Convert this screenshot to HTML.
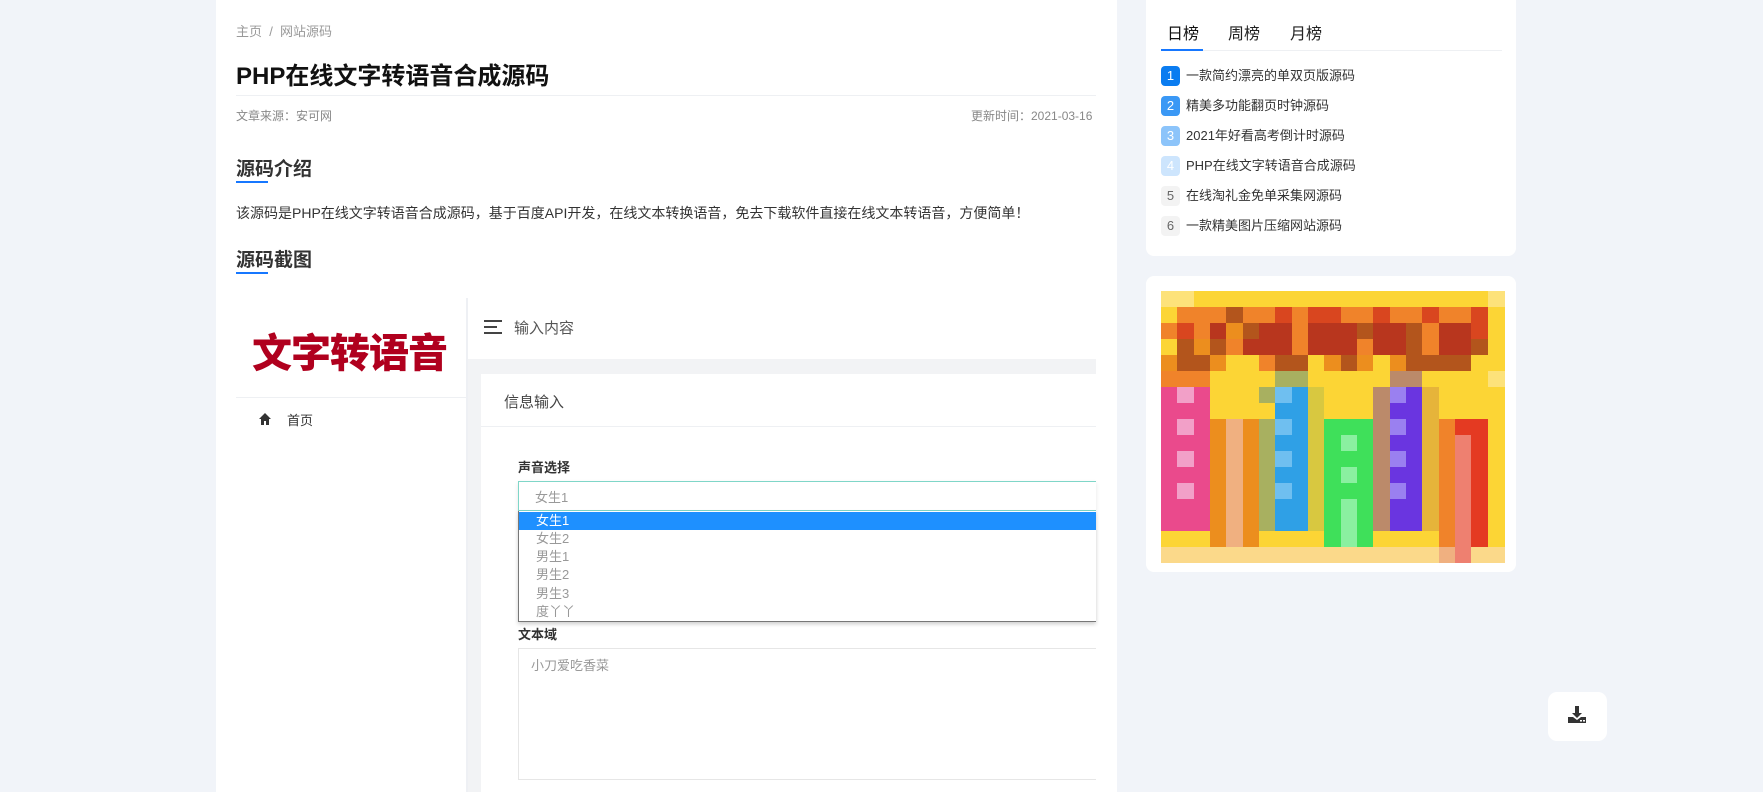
<!DOCTYPE html>
<html><head><meta charset="utf-8">
<style>
*{margin:0;padding:0;box-sizing:border-box}
html,body{width:1763px;height:792px;overflow:hidden}
body{background:#f1f4f9;position:relative;font-family:"Liberation Sans","Noto Sans CJK SC",sans-serif;color:#333}
.a{position:absolute;white-space:nowrap}
.card{position:absolute;background:#fff;border-radius:8px}
.hl{position:absolute;height:1px;background:#eef0f3}
.badge{position:absolute;width:19px;height:20px;border-radius:4px;color:#fff;font-size:13px;text-align:center;line-height:20px}
.li{position:absolute;font-size:13px;color:#333;line-height:20px}
.opt{position:absolute;left:536px;font-size:13px;color:#999;line-height:18px}
</style></head><body>
<div class="card" style="left:216px;top:-8px;width:901px;height:800px;border-radius:8px 8px 0 0"></div>
<div class="a" style="left:236px;top:21px;font-size:13px;color:#999">主页 &nbsp;/&nbsp; 网站源码</div>
<div class="a" style="left:236px;top:56px;font-size:24px;font-weight:bold;color:#111">PHP在线文字转语音合成源码</div>
<div class="hl" style="left:236px;top:95px;width:860px"></div>
<div class="a" style="left:236px;top:107px;font-size:12px;color:#888">文章来源：安可网</div>
<div class="a" style="left:971px;top:107px;font-size:12px;color:#888">更新时间：2021-03-16</div>
<div class="a" style="left:236px;top:154px;font-size:19px;font-weight:bold;color:#333">源码介绍</div>
<div class="a" style="left:236px;top:181px;width:32px;height:2px;background:#1677ff"></div>
<div class="a" style="left:236px;top:203px;font-size:14px;color:#333">该源码是PHP在线文字转语音合成源码，基于百度API开发，在线文本转换语音，免去下载软件直接在线文本转语音，方便简单！</div>
<div class="a" style="left:236px;top:245px;font-size:19px;font-weight:bold;color:#333">源码截图</div>
<div class="a" style="left:236px;top:272px;width:32px;height:2px;background:#1677ff"></div>

<div class="a" style="left:466px;top:298px;width:2px;height:494px;background:#eef0f4"></div>
<div class="a" style="left:252px;top:321px;font-size:40px;font-weight:900;color:#b0001e;letter-spacing:-1px;font-family:'Noto Sans CJK SC',sans-serif">文字转语音</div>
<div class="hl" style="left:236px;top:397px;width:230px"></div>
<svg class="a" style="left:258px;top:412px" width="14" height="14" viewBox="0 0 14 14"><path d="M7 1L1 7h2v6h3V9h2v4h3V7h2z" fill="#333"/></svg>
<div class="a" style="left:287px;top:410px;font-size:13px;color:#333">首页</div>
<svg class="a" style="left:483px;top:319px" width="20" height="16"><path d="M1 2h18M1 8h13M1 14h18" stroke="#444" stroke-width="2"/></svg>
<div class="a" style="left:514px;top:317px;font-size:15px;color:#555">输入内容</div>
<div class="a" style="left:468px;top:359px;width:628px;height:433px;background:#f2f3f5"></div>
<div class="a" style="left:481px;top:374px;width:615px;height:418px;background:#fff"></div>
<div class="a" style="left:504px;top:391px;font-size:15px;color:#444">信息输入</div>
<div class="hl" style="left:481px;top:426px;width:615px"></div>
<div class="a" style="left:518px;top:457px;font-size:13px;font-weight:bold;color:#333">声音选择</div>
<div class="a" style="left:518px;top:481px;width:578px;height:30px;border:1px solid #7fd6c8;border-right:none;box-shadow:0 2px 4px rgba(0,0,0,.1)"></div>
<div class="a" style="left:535px;top:487px;font-size:13px;color:#999">女生1</div>
<div class="a" style="left:518px;top:511px;width:578px;height:111px;background:#fff;border:1px solid #777;border-right:none;border-top:none;box-shadow:0 2px 4px rgba(0,0,0,.2)"></div>
<div class="a" style="left:519px;top:512px;width:577px;height:18px;background:#1e90ff"></div>
<div class="opt" style="top:512px;color:#fff">女生1</div>
<div class="opt" style="top:530px">女生2</div>
<div class="opt" style="top:548px">男生1</div>
<div class="opt" style="top:566px">男生2</div>
<div class="opt" style="top:585px">男生3</div>
<div class="opt" style="top:603px">度丫丫</div>
<div class="a" style="left:518px;top:624px;font-size:13px;font-weight:bold;color:#333">文本域</div>
<div class="a" style="left:518px;top:648px;width:578px;height:132px;border:1px solid #e6e6e6;border-right:none"></div>
<div class="a" style="left:531px;top:655px;font-size:13px;color:#999">小刀爱吃香菜</div>

<div class="card" style="left:1146px;top:-8px;width:370px;height:264px"></div>
<div class="a" style="left:1167px;top:20px;font-size:16px;color:#111">日榜</div>
<div class="a" style="left:1228px;top:20px;font-size:16px;color:#222">周榜</div>
<div class="a" style="left:1290px;top:20px;font-size:16px;color:#222">月榜</div>
<div class="hl" style="left:1161px;top:50px;width:341px"></div>
<div class="a" style="left:1161px;top:49px;width:42px;height:2px;background:#1677ff"></div>
<div class="badge" style="left:1161px;top:66px;background:#0a7cf0">1</div><div class="li" style="left:1186px;top:66px">一款简约漂亮的单双页版源码</div>
<div class="badge" style="left:1161px;top:96px;background:#3a98f5">2</div><div class="li" style="left:1186px;top:96px">精美多功能翻页时钟源码</div>
<div class="badge" style="left:1161px;top:126px;background:#8cc4fa">3</div><div class="li" style="left:1186px;top:126px">2021年好看高考倒计时源码</div>
<div class="badge" style="left:1161px;top:156px;background:#cde5fd">4</div><div class="li" style="left:1186px;top:156px">PHP在线文字转语音合成源码</div>
<div class="badge" style="left:1161px;top:186px;background:#f3f3f3;color:#666">5</div><div class="li" style="left:1186px;top:186px">在线淘礼金免单采集网源码</div>
<div class="badge" style="left:1161px;top:216px;background:#f3f3f3;color:#666">6</div><div class="li" style="left:1186px;top:216px">一款精美图片压缩网站源码</div>

<div class="card" style="left:1146px;top:276px;width:370px;height:296px"></div>
<div id="grid" class="a" style="left:1161px;top:291px;width:343px;height:272px;background:#fcd535"></div>

<div class="card" style="left:1548px;top:692px;width:59px;height:49px;border-radius:9px"></div>
<svg class="a" style="left:1567px;top:705px" width="20" height="20" viewBox="0 0 20 20"><path d="M8 1h4v7h3l-5 5-5-5h3z" fill="#333"/><path d="M1 12h5l4 3 4-3h5v6H1z" fill="#333"/><rect x="13" y="15" width="2" height="1.5" fill="#fff"/><rect x="16" y="15" width="2" height="1.5" fill="#fff"/></svg>

<script>
var pal={Y:'#fcd535',y:'#fde27a',O:'#f0832a',R:'#d9461f',D:'#b8361e',B:'#b3551c',P:'#ea4a8c',p:'#f2a0c8',b:'#2fa0e6',l:'#6fbff0',G:'#3fe05a',g:'#8af0a0',K:'#bb8a6a',V:'#6a35e0',v:'#9a80f0',o:'#ec8e1e',s:'#f0b080',r:'#e43a22',q:'#ee8070',A:'#a8b060',W:'#fbd98a',T:'#e6b43a',Q:'#d8c840'};
var rows=["yyYYYYYYYYYYYYYYYYYYy","YOOOBOORORROOROOROORY","ORODoBDDODDDBDDBODDRY","YBoBODDDODDDODDBODDBY","oBBoYYOBBYoBoYoBBBBYY","OOOYYYYAAYYYYYKKYYYYy",
"PpPYYYAlbQYYYKvVTYYYY","PPPYYYYbbQYYYKVVTYYYY","PpPosoAlbQGGGKvVTOrrY","PPPosoAbbQGgGKVVTOqrY","PpPosoAlbQGGGKvVTOqrY","PPPosoAbbQGgGKVVTOqrY","PpPosoAlbQGGGKvVTOqrY","PPPosoAbbQGgGKVVTOqrY","PPPosoAbbQGgGKVVTOqrY",
"YYYosoYYYYGgGYYYYOqrY","WWWWWWWWWWWWWWWWWsqWW"];
var g=document.getElementById('grid'),h='';
for(var i=0;i<rows.length;i++)for(var j=0;j<21;j++){h+='<div style="position:absolute;left:'+(j*16.33)+'px;top:'+(i*16)+'px;width:17px;height:16px;background:'+pal[rows[i][j]]+'"></div>';}
g.innerHTML=h;
</script>
</body></html>
